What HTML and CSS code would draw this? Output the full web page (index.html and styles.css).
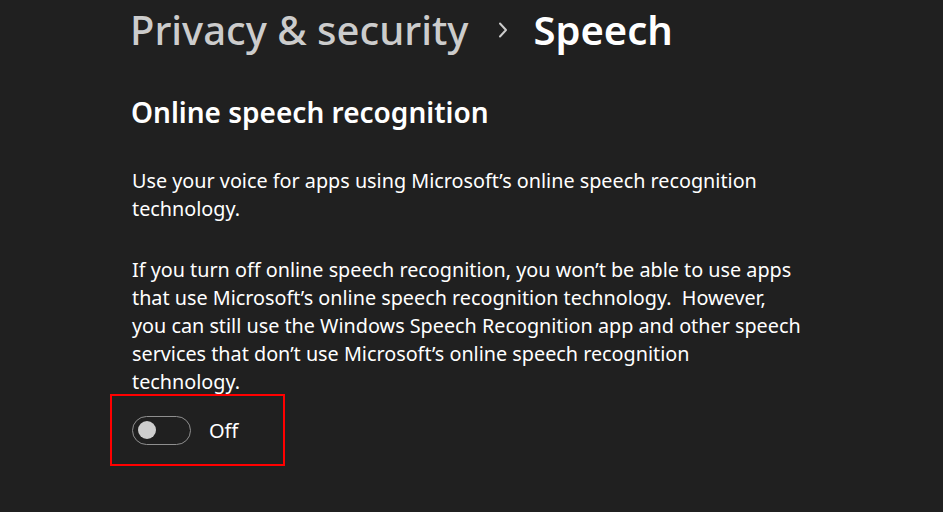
FILE: index.html
```html
<!DOCTYPE html>
<html lang="en">
<head>
<meta charset="utf-8">
<title>Speech</title>
<link rel="stylesheet" href="styles.css">
</head>
<body>
<main class="page">
  <nav class="crumbs">
    <span class="crumb-parent">Privacy &amp; security</span>
    <svg class="chev" width="12" height="16" viewBox="0 0 12 16"><path d="M3 1.5 L9 8 L3 14.5" fill="none" stroke="#cccccc" stroke-width="2" stroke-linecap="round" stroke-linejoin="round"/></svg>
    <span class="crumb-current">Speech</span>
  </nav>
  <h2 class="section-title">Online speech recognition</h2>
  <p class="desc first">Use your voice for apps using Microsoft’s online speech recognition technology.</p>
  <p class="desc second">If you turn off online speech recognition, you won’t be able to use apps<br>that use Microsoft’s online speech recognition technology.&nbsp; However,<br>you can still use the Windows Speech Recognition app and other speech<br>services that don’t use Microsoft’s online speech recognition<br>technology.</p>
  <div class="highlight">
    <div class="toggle"><span class="knob"></span></div>
    <span class="toggle-label">Off</span>
  </div>
</main>
</body>
</html>
```
FILE: styles.css
```css
html, body {
  margin: 0;
  padding: 0;
  background: #202020;
  height: 100%;
}
body {
  font-family: "Noto Sans", "Open Sans", sans-serif;
  color: #ffffff;
}
.page {
  padding-left: 130px;
  padding-top: 1px;
}
.crumbs {
  display: flex;
  align-items: center;
  height: 56px;
  font-size: 40px;
  font-weight: 500;
}
.crumb-parent {
  color: #cccccc;
}
.chev {
  margin-left: 29px;
  margin-right: 24px;
  position: relative;
  top: 1px;
}
.crumb-current {
  color: #ffffff;
  font-weight: 600;
}
.section-title {
  margin: 37px 0 0 1px;
  font-size: 28px;
  line-height: 36px;
  font-weight: 600;
}
.desc {
  margin: 0;
  font-size: 19.8px;
  line-height: 28px;
  width: 700px;
  padding-left: 2px;
}
.desc.first {
  margin-top: 37px;
}
.desc.second {
  margin-top: 33px;
}
.highlight {
  margin-top: -2px;
  margin-left: -20px;
  width: 171px;
  height: 68px;
  border: 2px solid #ff0000;
  box-sizing: content-box;
  display: flex;
  align-items: center;
}
.toggle {
  margin-left: 20px;
  width: 52px;
  height: 27px;
  border: 1.5px solid #8f8f8f;
  border-radius: 16px;
  display: flex;
  align-items: center;
  padding-left: 5px;
  box-sizing: content-box;
}
.knob {
  width: 18px;
  height: 18px;
  border-radius: 50%;
  background: #cecece;
}
.toggle-label {
  margin-left: 18px;
  font-size: 20px;
}
```
